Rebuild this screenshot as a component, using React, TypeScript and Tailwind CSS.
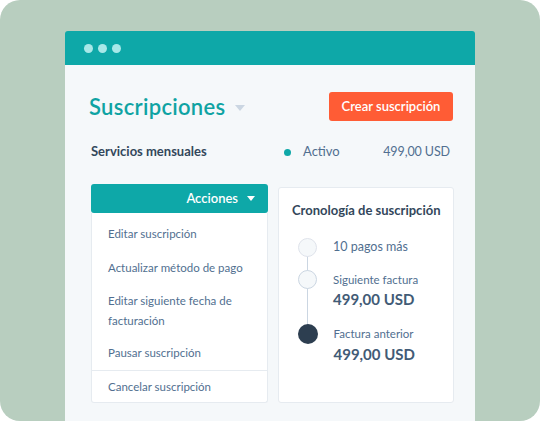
import React from "react";

const font = { fontFamily: "Lato, 'Noto Sans', sans-serif" };

function Caret({ className }: { className?: string }) {
  return (
    <svg width="10" height="6" viewBox="0 0 10 6" className={className}>
      <path d="M0 0 L10 0 L5 6 Z" fill="currentColor" />
    </svg>
  );
}

export default function App() {
  return (
    <div className="w-[540px] h-[421px] bg-white" style={font}>
      <div className="w-full h-full bg-[#b8cebf] rounded-[20px] pt-[31px] px-[65px] flex flex-col overflow-hidden">
        <div className="flex-1 flex flex-col">
          {/* Header */}
          <div className="h-[34px] shrink-0 bg-[#0ea8a8] rounded-t-[3px] flex items-center gap-[5px] pl-[19px]">
            <span className="w-[9px] h-[9px] rounded-full bg-[#a8e8e8]" />
            <span className="w-[9px] h-[9px] rounded-full bg-[#a8e8e8]" />
            <span className="w-[9px] h-[9px] rounded-full bg-[#a8e8e8]" />
          </div>
          {/* Body */}
          <div className="flex-1 bg-[#f5f8fa] pl-[26px] pr-[21px] pt-[27px] flex flex-col">
            {/* Title row */}
            <div className="flex items-center justify-between h-[29px]">
              <div className="flex items-center gap-[10px] -ml-[2px]">
                <span className="text-[22px] font-semibold text-[#0fa3a3] leading-none tracking-[0.3px]">
                  Suscripciones
                </span>
                <Caret className="text-[#cbd6e2] mt-[2px]" />
              </div>
              <button className="h-[29px] w-[124px] mr-[1px] rounded-[3px] bg-[#ff5c35] text-white text-[13px] font-semibold flex items-center justify-center">
                Crear suscripción
              </button>
            </div>
            {/* Subscription row */}
            <div className="flex items-center h-[20px] mt-[21px] text-[13px]">
              <span className="w-[193px] font-bold text-[#33475b]">Servicios mensuales</span>
              <span className="w-[7px] h-[7px] rounded-full bg-[#0fa8a8]" />
              <span className="ml-[12px] text-[#516f90] text-[13px]">Activo</span>
              <span className="ml-auto mr-[4px] text-[#516f90] text-[12.5px] tracking-[-0.1px]">499,00 USD</span>
            </div>
            {/* Columns */}
            <div className="flex gap-[10px] mt-[22px] flex-1 pb-[18px]">
              {/* Left */}
              <div className="w-[177px] flex flex-col">
                <div className="h-[29px] bg-[#0ea8a8] rounded-[3px] flex items-center justify-end pr-[13px] gap-[9px] text-white text-[13px] font-semibold">
                  <span>Acciones</span>
                  <Caret className="text-white w-[8px] h-[5px]" />
                </div>
                <div className="flex-1 bg-white border border-[#e6ebf0] border-t-0 rounded-b-[3px] flex flex-col text-[11.5px] text-[#516f90]">
                  <div className="pl-[16px] pt-[13px]">
                    <div className="h-[16px] flex items-center">Editar suscripción</div>
                    <div className="h-[16px] flex items-center mt-[18px]">Actualizar método de pago</div>
                    <div className="mt-[15px] leading-[20px]">
                      Editar siguiente fecha de
                      <br />
                      facturación
                    </div>
                    <div className="h-[16px] flex items-center mt-[14px]">Pausar suscripción</div>
                  </div>
                  <div className="border-t border-[#e6ebf0] mt-[9px] pl-[16px] pt-[8px]">
                    <div className="h-[16px] flex items-center">Cancelar suscripción</div>
                  </div>
                </div>
              </div>
              {/* Right */}
              <div className="w-[176px] mt-[3px] bg-white border border-[#e6ebf0] rounded-[3px] pl-[13px] pt-[14px]">
                <div className="text-[13px] font-bold text-[#33475b] h-[18px] flex items-center">
                  Cronología de suscripción
                </div>
                <div className="relative mt-[18px]">
                  <div className="absolute left-[15px] top-[18px] w-[1px] h-[76px] bg-[#cbd6e2]" />
                  <div className="flex items-center gap-[16px] h-[19px]">
                    <span className="w-[19px] h-[19px] ml-[6px] rounded-full bg-[#f5f8fa] border border-[#dfe3eb] relative" />
                    <span className="text-[12.5px] text-[#516f90]">10 pagos más</span>
                  </div>
                  <div className="flex mt-[13px]">
                    <span className="w-[19px] h-[19px] ml-[6px] rounded-full bg-[#f5f8fa] border border-[#cbd6e2] relative shrink-0" />
                    <div className="ml-[16px] flex flex-col">
                      <span className="text-[11.5px] text-[#516f90] h-[19px] flex items-center">Siguiente factura</span>
                      <span className="text-[15px] font-bold text-[#425b76] h-[20px] flex items-center">499,00 USD</span>
                    </div>
                  </div>
                  <div className="flex mt-[15px]">
                    <span className="w-[20px] h-[20px] ml-[5.5px] rounded-full bg-[#2d3e50] relative shrink-0" />
                    <div className="ml-[16px] flex flex-col">
                      <span className="text-[11.5px] text-[#516f90] h-[20px] flex items-center">Factura anterior</span>
                      <span className="text-[15px] font-bold text-[#425b76] h-[20px] flex items-center">499,00 USD</span>
                    </div>
                  </div>
                </div>
              </div>
            </div>
          </div>
        </div>
      </div>
    </div>
  );
}
